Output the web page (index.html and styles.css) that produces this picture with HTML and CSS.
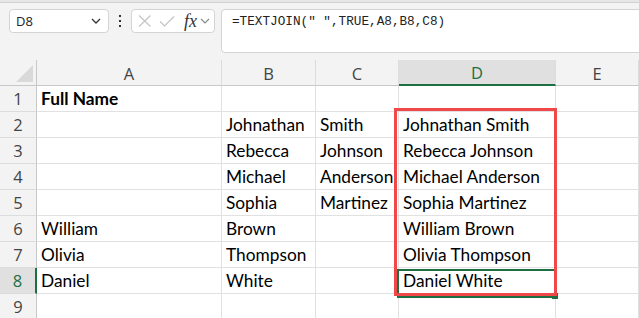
FILE: index.html
```html
<!DOCTYPE html>
<html lang="en">
<head>
    <meta charset="UTF-8">
    <title>TEXTJOIN</title>
    <link rel="stylesheet" href="styles.css">
</head>
<body>
    <div class="topline"></div>

    <!-- Formula bar -->
    <div class="formula-bar">
        <div class="name-box">
            <span>D8</span>
            <svg class="chev" width="10" height="6" viewBox="0 0 10 6"><path d="M1 1 L5 5 L9 1" fill="none" stroke="#333" stroke-width="1.3"/></svg>
        </div>
        <div class="more-dots">
            <span></span><span></span><span></span>
        </div>
        <div class="fn-box">
            <svg width="14" height="12" viewBox="0 0 14 12"><path d="M1 0.5 L12.5 11.5 M12.5 0.5 L1 11.5" stroke="#c4c4c4" stroke-width="1.2" fill="none"/></svg>
            <svg width="16" height="11" viewBox="0 0 16 11"><path d="M1 5.5 L5.5 10 L15 0.5" stroke="#c4c4c4" stroke-width="1.2" fill="none"/></svg>
            <span class="fx">fx</span>
            <svg width="10" height="6" viewBox="0 0 10 6"><path d="M1 1 L5 5 L9 1" fill="none" stroke="#888" stroke-width="1.1"/></svg>
        </div>
        <div class="formula-input">=TEXTJOIN(" ",TRUE,A8,B8,C8)</div>
    </div>

    <!-- Sheet -->
    <div class="sheet">
        <div class="row head-row">
            <div class="corner">
                <svg width="17" height="17" viewBox="0 0 17 17"><path d="M17 0 L17 17 L0 17 Z" fill="#d9d9d9"/></svg>
            </div>
            <div class="col-head">A</div>
            <div class="col-head">B</div>
            <div class="col-head">C</div>
            <div class="col-head active">D</div>
            <div class="col-head">E</div>
        </div>

        <div class="row">
            <div class="row-head">1</div>
            <div class="cell bold">Full Name</div>
            <div class="cell"></div>
            <div class="cell"></div>
            <div class="cell"></div>
            <div class="cell"></div>
        </div>
        <div class="row">
            <div class="row-head">2</div>
            <div class="cell"></div>
            <div class="cell">Johnathan</div>
            <div class="cell">Smith</div>
            <div class="cell">Johnathan Smith</div>
            <div class="cell"></div>
        </div>
        <div class="row">
            <div class="row-head">3</div>
            <div class="cell"></div>
            <div class="cell">Rebecca</div>
            <div class="cell">Johnson</div>
            <div class="cell">Rebecca Johnson</div>
            <div class="cell"></div>
        </div>
        <div class="row">
            <div class="row-head">4</div>
            <div class="cell"></div>
            <div class="cell">Michael</div>
            <div class="cell">Anderson</div>
            <div class="cell">Michael Anderson</div>
            <div class="cell"></div>
        </div>
        <div class="row">
            <div class="row-head">5</div>
            <div class="cell"></div>
            <div class="cell">Sophia</div>
            <div class="cell">Martinez</div>
            <div class="cell">Sophia Martinez</div>
            <div class="cell"></div>
        </div>
        <div class="row">
            <div class="row-head">6</div>
            <div class="cell">William</div>
            <div class="cell">Brown</div>
            <div class="cell"></div>
            <div class="cell">William Brown</div>
            <div class="cell"></div>
        </div>
        <div class="row">
            <div class="row-head">7</div>
            <div class="cell">Olivia</div>
            <div class="cell">Thompson</div>
            <div class="cell"></div>
            <div class="cell">Olivia Thompson</div>
            <div class="cell"></div>
        </div>
        <div class="row">
            <div class="row-head active">8</div>
            <div class="cell">Daniel</div>
            <div class="cell">White</div>
            <div class="cell"></div>
            <div class="cell">Daniel White</div>
            <div class="cell"></div>
        </div>
        <div class="row">
            <div class="row-head">9</div>
            <div class="cell"></div>
            <div class="cell"></div>
            <div class="cell"></div>
            <div class="cell"></div>
            <div class="cell"></div>
        </div>

        <!-- overlays: active cell and highlight box -->
        <div class="selection"><div class="handle"></div></div>
        <div class="highlight"></div>
    </div>
</body>
</html>
```

FILE: styles.css
```css
body {
    margin: 0;
    background: #f3f3f3;
    font-family: Lato, "Open Sans", sans-serif;
    overflow: hidden;
    width: 639px;
    height: 318px;
}
.topline {
    height: 2px;
    background: #e6e6e6;
    border-bottom: 1px solid #d2d2d2;
}

/* formula bar */
.formula-bar {
    display: flex;
    align-items: flex-start;
    height: 57px;
    padding: 6px 0 0 9px;
    box-sizing: border-box;
}
.name-box {
    width: 100px;
    height: 24px;
    box-sizing: border-box;
    background: #fff;
    border: 1px solid #d4d4d4;
    border-radius: 4px;
    display: flex;
    align-items: center;
    justify-content: space-between;
    padding: 0 7px 0 6px;
    font-family: "Open Sans", sans-serif;
    font-size: 13px;
    color: #222;
}
.more-dots {
    width: 22px;
    height: 24px;
    display: flex;
    flex-direction: column;
    align-items: center;
    justify-content: center;
    gap: 3px;
}
.more-dots span {
    width: 2px;
    height: 2px;
    background: #333;
}
.fn-box {
    width: 84px;
    height: 24px;
    box-sizing: border-box;
    background: #fff;
    border: 1px solid #d4d4d4;
    border-radius: 4px;
    display: flex;
    align-items: center;
    padding: 0 2px 0 6px;
    gap: 7px;
}
.fn-box .fx {
    font-family: "Liberation Serif", serif;
    font-style: italic;
    font-size: 18px;
    color: #333;
    margin-left: 2px;
    margin-right: -4px;
    line-height: 1;
}
.formula-input {
    flex: 1;
    margin-left: 6px;
    margin-right: -10px;
    height: 44px;
    box-sizing: border-box;
    background: #fff;
    border: 1px solid #d4d4d4;
    border-radius: 4px;
    padding: 4px 0 0 10px;
    font-family: "Liberation Mono", monospace;
    font-size: 12.7px;
    color: #222;
}

/* sheet grid */
.sheet {
    position: relative;
    background: #fff;
}
.row {
    display: grid;
    grid-template-columns: 37px 185px 94px 83px 157px 1fr;
    height: 26px;
}
.head-row {
    background: #f3f3f3;
}
.corner {
    border-right: 1px solid #c8c8c8;
    border-bottom: 1px solid #c8c8c8;
    display: flex;
    align-items: flex-end;
    justify-content: flex-end;
    padding: 0 3px 3px 0;
}
.col-head {
    border-right: 1px solid #dcdcdc;
    border-bottom: 1px solid #c8c8c8;
    display: flex;
    align-items: center;
    justify-content: center;
    font-family: "Open Sans", sans-serif;
    font-size: 16.5px;
    color: #444;
    padding-top: 1px;
}
.col-head.active {
    background: #e0e0e0;
    color: #1d6f42;
    border-bottom: 2px solid #1d6f42;
}
.row-head {
    background: #f3f3f3;
    border-right: 1px solid #c8c8c8;
    border-bottom: 1px solid #dcdcdc;
    display: flex;
    align-items: center;
    justify-content: center;
    font-family: "Open Sans", sans-serif;
    font-size: 16.5px;
    color: #444;
}
.row-head.active {
    background: #e0e0e0;
    color: #1d6f42;
    border-right: 2px solid #1d6f42;
}
.cell {
    border-right: 1px solid #e1e1e1;
    border-bottom: 1px solid #e1e1e1;
    padding: 2px 0 0 4px;
    font-size: 17.3px;
    line-height: 22px;
    color: #000;
    white-space: nowrap;
    overflow: hidden;
}
.cell.bold {
    font-weight: bold;
}

/* overlays */
.selection {
    position: absolute;
    left: 397px;
    top: 209px;
    width: 160px;
    height: 29px;
    box-sizing: border-box;
    border: 2px solid #1d6f42;
}
.handle {
    position: absolute;
    right: -3px;
    bottom: -3px;
    width: 6px;
    height: 6px;
    background: #1d6f42;
}
.highlight {
    position: absolute;
    left: 394px;
    top: 48px;
    width: 163px;
    height: 188px;
    box-sizing: border-box;
    border: 3px solid #f04848;
}
```
